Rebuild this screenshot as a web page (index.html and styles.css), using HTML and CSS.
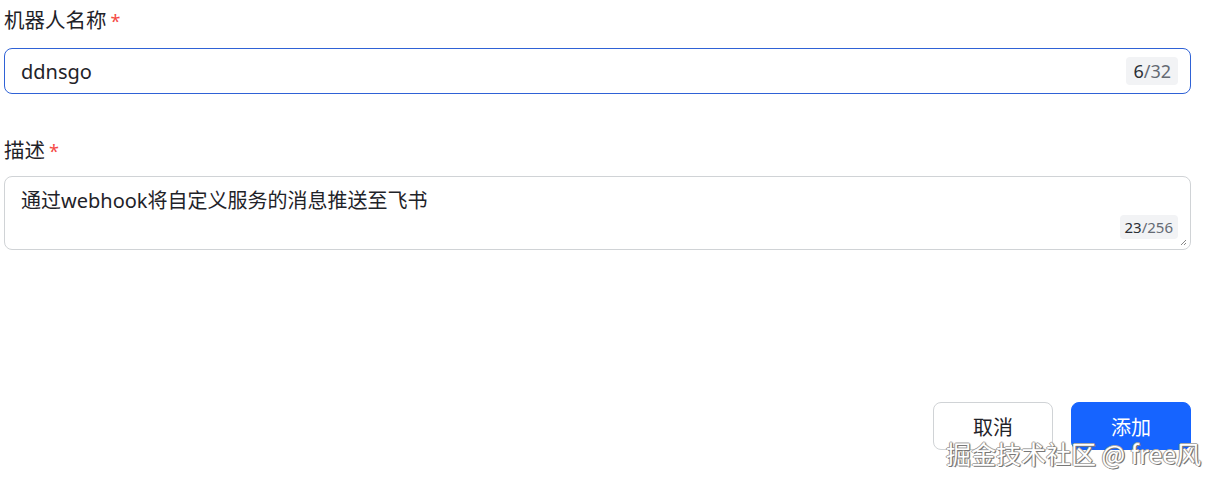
FILE: index.html
```html
<!DOCTYPE html>
<html lang="zh">
<head>
<meta charset="utf-8">
<link rel="stylesheet" href="styles.css">
</head>
<body>
<div class="form">
  <div class="item">
    <div class="label">机器人名称<span class="req">*</span></div>
    <div class="input focus">
      <span class="value">ddnsgo</span>
      <span class="count"><b>6</b>/32</span>
    </div>
  </div>
  <div class="item item2">
    <div class="label">描述<span class="req">*</span></div>
    <div class="textarea">
      <span class="value">通过webhook将自定义服务的消息推送至飞书</span>
      <span class="count small"><b>23</b>/256</span>
      <svg class="grip" width="8" height="8" viewBox="0 0 8 8"><path d="M7 2 L2 7 M7 5 L5 7" stroke="#888" stroke-width="1"/></svg>
    </div>
  </div>
  <div class="footer">
    <button class="btn cancel">取消</button>
    <button class="btn primary">添加</button>
  </div>
</div>
<div class="watermark">掘金技术社区 @ free风</div>
</body>
</html>
```
FILE: styles.css
```css
html, body {
  margin: 0;
  padding: 0;
  background: #fff;
}
body {
  font-family: "Noto Sans", "Noto Sans CJK SC", sans-serif;
  color: #1f2329;
  width: 1219px;
  height: 486px;
  overflow: hidden;
  position: relative;
}
.form {
  padding: 4px 28px 0 4px;
}
.label {
  font-size: 20.5px;
  line-height: 32px;
  color: #1f2329;
  height: 32px;
}
.req {
  color: #f54a45;
  margin-left: 4px;
  font-size: 18px;
}
.input {
  margin-top: 12px;
  height: 46px;
  box-sizing: border-box;
  border: 1px solid #2f62d6;
  border-radius: 8px;
  display: flex;
  align-items: center;
  justify-content: space-between;
  padding: 0 12px 0 16px;
}
.value {
  font-size: 20px;
  color: #1f2329;
}
.count {
  background: #f2f3f5;
  border-radius: 4px;
  font-size: 18px;
  color: #646a73;
  padding: 0 7px;
  line-height: 28px;
}
.count b {
  font-weight: normal;
  color: #2b2f36;
}
.item2 {
  margin-top: 40px;
}
.textarea {
  margin-top: 10px;
  height: 74px;
  box-sizing: border-box;
  border: 1px solid #d0d3d6;
  border-radius: 8px;
  padding: 9px 16px;
  position: relative;
}
.textarea .value {
  line-height: 30px;
}
.count.small {
  position: absolute;
  right: 12px;
  bottom: 10px;
  font-size: 15px;
  line-height: 24px;
  padding: 0 5px;
}
.grip {
  position: absolute;
  right: 3px;
  bottom: 3px;
}
.footer {
  margin-top: 152px;
  display: flex;
  justify-content: flex-end;
  gap: 18px;
}
.btn {
  width: 120px;
  height: 48px;
  border-radius: 8px;
  font-family: "Noto Sans CJK SC", sans-serif;
  font-size: 20px;
  cursor: pointer;
}
.cancel {
  background: #fff;
  border: 1px solid #d0d3d6;
  color: #1f2329;
}
.primary {
  background: #1664ff;
  border: 1px solid #1664ff;
  color: #fff;
}
.watermark {
  position: absolute;
  left: 946px;
  top: 435px;
  font-family: "Noto Sans CJK SC", sans-serif;
  font-size: 25px;
  color: #fff;
  text-shadow: 1px 1px 0 #777, -1px 0 0 #999, 0 -1px 0 #aaa, 1px 0 1px #666;
  white-space: nowrap;
}
```
